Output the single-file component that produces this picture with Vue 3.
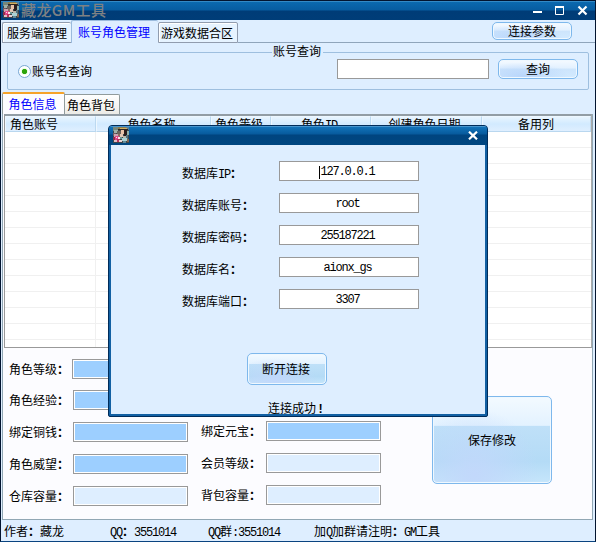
<script setup>
import { h } from 'vue'

const columns = ['角色账号', '角色名称', '角色等级', '角色ID', '创建角色日期', '备用列']
const leftFields = [
  { label: '角色等级', on: true },
  { label: '角色经验', on: true },
  { label: '绑定铜钱', on: true },
  { label: '角色威望', on: true },
  { label: '仓库容量', on: false },
]
const rightFields = [
  { label: '绑定元宝', on: true },
  { label: '会员等级', on: false },
  { label: '背包容量', on: false },
]
const dbFields = [
  { name: '数据库', latin: 'IP', value: '127.0.0.1', caret: true },
  { name: '数据库账号', value: 'root' },
  { name: '数据库密码', value: '255187221' },
  { name: '数据库名', value: 'aionx_gs' },
  { name: '数据库端口', value: '3307' },
]

// Small portrait: [x, y, width, height, colour]
const pixels = [
  [0, 0, 16, 16, '#3d464b'], [0, 0, 5, 4, '#77877b'], [5, 0, 8, 2, '#8a7a4c'], [13, 0, 3, 3, '#5a7f94'],
  [5, 2, 10, 1, '#2d2420'], [7, 1, 7, 1, '#d0b060'], [1, 3, 4, 3, '#9eb0a6'], [4, 4, 4, 3, '#6b625c'],
  [8, 3, 3, 4, '#e9c3a8'], [11, 3, 3, 6, '#2a1d1c'], [14, 4, 2, 4, '#8eb0aa'], [0, 6, 3, 3, '#74585f'],
  [1, 7, 4, 3, '#c9a3b0'], [5, 7, 5, 3, '#8b6b60'], [7, 7, 3, 3, '#e2c6b4'], [0, 10, 2, 3, '#8f3048'],
  [2, 9, 4, 4, '#e0488a'], [5, 10, 2, 2, '#f8e2ea'], [7, 10, 2, 2, '#6a9997'], [10, 9, 3, 3, '#b9b8ac'],
  [13, 8, 2, 4, '#527380'], [9, 11, 5, 3, '#a9d2d6'], [1, 13, 3, 2, '#e2bbc5'], [4, 12, 3, 3, '#b8325c'],
  [6, 13, 3, 2, '#e9d0d2'], [14, 12, 2, 3, '#84644f'], [10, 14, 3, 2, '#638b98'], [3, 10, 1, 1, '#ffd8ea'],
]
const Portrait = () =>
  h('svg', { width: 16, height: 16, viewBox: '0 0 16 16', 'shape-rendering': 'crispEdges' },
    pixels.map(([x, y, width, height, fill]) => h('rect', { x, y, width, height, fill })))
</script>

<template>
  <div class="window">
    <header class="titlebar">
      <Portrait />
      <span class="title">藏龙GM工具</span>
      <svg class="controls" width="56" height="12" viewBox="0 0 56 12" fill="none" stroke="#fff">
        <path d="M1 7H10" stroke-width="2" />
        <path d="M23.5 1.5H31.5V9.5H23.5Z" stroke-width="1" />
        <path d="M23 2H32" stroke-width="2" />
        <path d="M46.5 1.5L54.5 9.5M54.5 1.5L46.5 9.5" stroke-width="2.2" />
      </svg>
    </header>

    <nav class="tabs">
      <div class="tab first">服务端管理</div>
      <div class="tab active">账号角色管理</div>
      <div class="tab third">游戏数据合区</div>
      <div class="tabline"><button class="btn small">连接参数</button></div>
    </nav>

    <fieldset class="query">
      <legend>账号查询</legend>
      <span class="radio"></span>
      <span class="radiolabel">账号名查询</span>
      <span class="search"></span>
      <button class="btn find">查询</button>
    </fieldset>

    <nav class="subtabs">
      <div class="sub on">角色信息</div>
      <div class="sub">角色背包</div>
    </nav>

    <main class="panel">
      <div class="table">
        <div class="thead">
          <span v-for="c in columns" :key="c" class="th">{{ c.replace('ID', '') }}<i v-if="c === '角色ID'" class="mono">ID</i></span>
        </div>
        <div class="tbody"><div class="firstcol"></div></div>
      </div>
      <div class="form">
        <div class="left">
          <div v-for="f in leftFields" :key="f.label" class="field">
            <label>{{ f.label }}<b>：</b></label><span class="box" :class="{ filled: f.on }"></span>
          </div>
        </div>
        <div class="right">
          <div v-for="f in rightFields" :key="f.label" class="field">
            <label>{{ f.label }}<b>：</b></label><span class="box" :class="{ filled: f.on }"></span>
          </div>
        </div>
        <button class="btn save">保存修改</button>
      </div>
    </main>

    <footer class="status">
      <span class="s1">作者<b>：</b>藏龙</span>
      <span class="s2"><i class="mono">QQ</i><b>：</b><i class="mono">3551014</i></span>
      <span class="s3"><i class="mono">QQ</i>群<i class="mono">:3551014</i></span>
      <span class="s4">加<i class="mono">Q</i>加群请注明<b>：</b><i class="mono">GM</i>工具</span>
    </footer>

    <section class="dialog">
      <div class="dtitle">
        <Portrait />
        <svg width="10" height="9" viewBox="0 0 10 9" stroke="#fff" stroke-width="2.2"><path d="M1 .7L9 8.3M9 .7L1 8.3" /></svg>
      </div>
      <div class="dbody">
        <div v-for="f in dbFields" :key="f.name" class="dbrow">
          <label>{{ f.name }}<i v-if="f.latin" class="mono">{{ f.latin }}</i><b>：</b></label>
          <span class="dbinput"><i class="mono" :class="{ caret: f.caret }">{{ f.value }}</i></span>
        </div>
        <button class="btn disconnect">断开连接</button>
        <div class="message">连接成功<b class="mono">!</b></div>
      </div>
    </section>
  </div>
</template>

<style>
body { margin: 0; overflow: hidden; }
</style>

<style scoped>
* { box-sizing: border-box; }
.window {
  position: relative; display: flex; flex-direction: column;
  width: 596px; height: 542px; overflow: hidden;
  background: #deeeff; color: #000;
  border: solid #02142f; border-width: 0 1px 0 1px; border-bottom: 1px solid #0a4480;
  font: 12px/16px "Noto Sans CJK SC", sans-serif; white-space: nowrap;
}
i { font-style: normal; }
.mono { font-family: "Liberation Mono", monospace; font-size: 12px; letter-spacing: -1.2px; }
.titlebar {
  flex: none; height: 20px; display: flex; align-items: flex-start; padding: 2px 7px 0 2px;
  background: linear-gradient(#02142f 0 1px, #3389c5 1px 2px, #0b69af 2px, #075ca0 10px, #003c77 11px, #003d78 20px);
}
.title { font-size: 15px; line-height: 15px; margin-left: 2px; letter-spacing: .4px; font-weight: 500; color: #7d8184; }
.controls { margin: 3px 0 0 auto; }
.tabs { flex: none; display: flex; height: 23px; align-items: flex-start; }
.tab {
  height: 21px; margin-top: 2px; line-height: 19px; text-align: center;
  border: 1px solid #919cae; border-right: 0; border-radius: 2px 2px 0 0;
  background: #e6f3ff; box-shadow: inset 1px 1px #fff; padding-right: 2px;
}
.first { width: 69px; margin-left: 1px; padding-right: 0; }
.active { width: 87px; height: 23px; margin-top: 0; line-height: 21px; color: #00f; background: #deeeff; border-bottom: 0; border-color: #9bbbdd; box-shadow: none; }
.third { width: 80px; border-right: 1px solid #919cae; }
.tabline { flex: 1; height: 23px; border-bottom: 1px solid #8fa5bb; display: flex; justify-content: flex-end; padding: 2px 23px 0 0; }
.btn {
  display: block; padding: 0; margin: 0; color: #000; font: inherit; text-align: center;
  border: 1px solid #7eb8ec; border-radius: 5px; box-shadow: inset 0 0 0 1px #eff8ff;
  background: radial-gradient(ellipse at 35% 90%, #c2d8fb, transparent 60%), linear-gradient(#f3faff, #e3f2ff 33%, #bfe0f8 34%, #b4dbf6 75%, #c6e6fb);
}
.small { width: 80px; height: 18px; line-height: 16px; }
.small, .find { background: radial-gradient(ellipse at 30% 90%, #b9d6fb, transparent 60%), linear-gradient(#f5faff, #e3f1ff 45%, #cde5fc 50%, #d3eaff); }
.query {
  flex: none; display: flex; align-items: flex-start; position: relative;
  width: 582px; height: 46px; margin: 1px 0 0 6px; padding: 0; min-width: 0;
  border: 1px solid #9ebfdf; border-radius: 2px;
}
.query legend { margin: 0 0 0 264px; padding: 0 1px; height: 16px; line-height: 14px; width: 51px; }
.radio {
  width: 13px; height: 13px; margin: 5px 0 0 10px; border-radius: 50%; border: 1px solid #7aa8d4;
  background: radial-gradient(circle, #2ca30a 0 2.2px, #e8ffe4 3px, #fff 4px);
}
.radiolabel { margin: 3px 0 0 1px; width: 60px; }
.search { width: 152px; height: 20px; margin-left: 245px; margin-top: -1px; border: 1px solid #999; background: #fff; }
.find { width: 80px; height: 20px; margin: -1px 0 0 9px; line-height: 18px; }
.subtabs { flex: none; display: flex; align-items: flex-end; height: 23px; padding-left: 1px; margin-top: 1px; }
.sub {
  width: 55px; height: 20px; text-align: center; line-height: 19px;
  border: 1px solid #919b9c; border-left: 0; border-bottom: 0; border-radius: 0 2px 0 0;
  background: linear-gradient(#fff, #ecebe6); padding-right: 2px;
}
.sub.on { width: 63px; height: 22px; line-height: 20px; color: #00f; background: #fcfcff; border: 1px solid #919b9c; border-top: 2px solid #f5a32a; border-bottom: 0; border-radius: 2px 2px 0 0; }
.panel { flex: none; height: 406px; width: 591px; margin-left: 1px; background: #fcfcff; border: solid #91a7b4; border-width: 0 1px 1px 1px; display: flex; flex-direction: column; }
.table { flex: none; height: 234px; width: 588px; margin-left: 1px; background: #fff; border: 1px solid #999; border-right-color: #aaa; border-top: 2px solid #929da5; }
.thead { display: grid; grid-template-columns: 91px 115px 60px 100px 111px 1fr; height: 16px; }
.th {
  text-align: center; height: 16px; padding-right: 4px;
  border: 1px solid #edf7ff; border-right: 1px solid #bcd9f0; border-bottom: 1px solid #b9d7ef;
  line-height: 14px; background: linear-gradient(#e8f5ff, #d2eaff 50%, #dfefff);
}
.th:first-child { text-align: left; padding-left: 4px; }
.th:last-child { padding-right: 1px; }
.tbody { height: 215px; background: repeating-linear-gradient(#fff 0 15px, #f0f0f0 15px 16px); }
.firstcol { width: 91px; height: 215px; border-right: 1px solid #f0f0f0; }
.form { display: flex; height: 171px; align-items: flex-start; }
.left { display: flex; flex-direction: column; gap: 12px; padding: 11px 0 0 6px; width: 186px; }
.left .field:nth-child(2) { margin-top: -1px; }
.right { display: flex; flex-direction: column; gap: 12px; padding: 73px 0 0 12px; width: 193px; }
.field { display: flex; height: 20px; align-items: center; }
.field label { flex: none; width: 64px; height: 18px; line-height: 17px; }
.left .field:first-child .box { margin-left: -1px; width: 116px; }
.right .field label { width: 65px; }
.box { flex: none; width: 115px; height: 20px; border: 1px solid #999; box-shadow: inset 0 0 0 1px #fff; background: #deeeff; }
.filled { background: #9dcfff; }
.save { width: 120px; height: 88px; margin: 48px 0 0 50px; line-height: 86px; }
.status { flex: none; height: 21px; display: flex; padding: 3px 0 0 3px; line-height: 16px; }
.s1 { width: 106px; }
.s2 { width: 98px; }
.s3 { width: 106px; }
.dialog {
  position: absolute; left: 107px; top: 125px; width: 380px; height: 292px;
  border: 1px solid #002c5a; border-radius: 4px 4px 2px 2px; background: #1260a3; overflow: hidden;
  display: flex; flex-direction: column;
}
.dtitle { flex: none; height: 19px; display: flex; justify-content: space-between; align-items: flex-start; padding: 1px 9px 0 4px; background: linear-gradient(#4795ce 0 1px, #1273b9 1px, #075a9d 8px, #00447f 9px, #004680); }
.dtitle svg:last-child { margin-top: 4px; }
.dbody { flex: none; width: 374px; height: 269px; margin-left: 2px; background: #deeeff; padding: 16px 0 0 71px; overflow: hidden; }
.dbrow { display: flex; height: 20px; margin-bottom: 12px; }
.dbrow label { flex: none; width: 97px; margin-top: 4px; line-height: 16px; }
.dbinput { width: 140px; height: 20px; border: 1px solid #999; background: #fff; text-align: center; line-height: 16px; padding-right: 3px; }
.caret { display: inline-block; height: 13px; line-height: 13px; box-shadow: -1px 0 #000; }
.disconnect { width: 80px; height: 32px; padding-right: 2px; line-height: 30px; }
.dbrow + .disconnect { margin: 44px 0 0 65px; }
.message { margin: 15px 0 0 86px; line-height: 16px; }
.message b { margin-left: 1px; }
</style>
